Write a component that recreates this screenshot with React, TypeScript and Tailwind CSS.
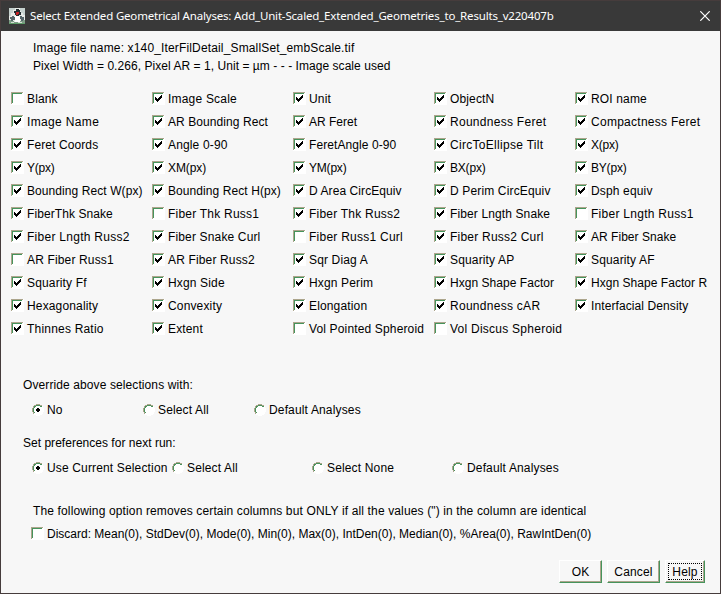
const rows: string[][] = [
  ["-Blank", "Image Scale", "Unit", "ObjectN", "ROI name"],
  ["Image Name", "AR Bounding Rect", "AR Feret", "Roundness Feret", "Compactness Feret"],
  ["Feret Coords", "Angle 0-90", "FeretAngle 0-90", "CircToEllipse Tilt", "X(px)"],
  ["Y(px)", "XM(px)", "YM(px)", "BX(px)", "BY(px)"],
  ["Bounding Rect W(px)", "Bounding Rect H(px)", "D Area CircEquiv", "D Perim CircEquiv", "Dsph equiv"],
  ["FiberThk Snake", "-Fiber Thk Russ1", "Fiber Thk Russ2", "Fiber Lngth Snake", "-Fiber Lngth Russ1"],
  ["Fiber Lngth Russ2", "Fiber Snake Curl", "-Fiber Russ1 Curl", "Fiber Russ2 Curl", "AR Fiber Snake"],
  ["-AR Fiber Russ1", "AR Fiber Russ2", "Sqr Diag A", "Squarity AP", "Squarity AF"],
  ["Squarity Ff", "Hxgn Side", "Hxgn Perim", "Hxgn Shape Factor", "Hxgn Shape Factor R"],
  ["Hexagonality", "Convexity", "Elongation", "Roundness cAR", "Interfacial Density"],
  ["Thinnes Ratio", "Extent", "-Vol Pointed Spheroid", "-Vol Discus Spheroid"],
];

// Labels whose letters sit tighter or looser than the rest.
const tracking: Record<string, string> = {
  "Image Name": "tracking-[0.35px]",
  "Image Scale": "tracking-[0.2px]",
  "AR Bounding Rect": "tracking-[0.08px]",
  "AR Feret": "tracking-[0px]",
  "Roundness Feret": "tracking-[0.28px]",
  "Compactness Feret": "tracking-[0.27px]",
  "Feret Coords": "tracking-[0.1px]",
  "FeretAngle 0-90": "tracking-[0.08px]",
  "CircToEllipse Tilt": "tracking-[0.3px]",
  "X(px)": "tracking-[-0.2px]",
  "Y(px)": "tracking-[-0.2px]",
  "XM(px)": "tracking-[-0.1px]",
  "YM(px)": "tracking-[-0.2px]",
  "BX(px)": "tracking-[-0.2px]",
  "BY(px)": "tracking-[-0.2px]",
  "Bounding Rect W(px)": "tracking-[0.08px]",
  "Bounding Rect H(px)": "tracking-[0.08px]",
  "D Area CircEquiv": "tracking-[0.08px]",
  "D Perim CircEquiv": "tracking-[0.15px]",
  "FiberThk Snake": "tracking-[0.08px]",
  "Fiber Lngth Russ2": "tracking-[0.27px]",
  "Fiber Lngth Russ1": "tracking-[0.27px]",
  "Fiber Lngth Snake": "tracking-[0.12px]",
  "Fiber Thk Russ1": "tracking-[0.22px]",
  "Fiber Thk Russ2": "tracking-[0.22px]",
  "Fiber Russ1 Curl": "tracking-[0.25px]",
  "Fiber Russ2 Curl": "tracking-[0.22px]",
  "AR Fiber Snake": "tracking-[0.03px]",
  "Hxgn Shape Factor": "tracking-[0.04px]",
  "Hxgn Shape Factor R": "tracking-[0.04px]",
  "Interfacial Density": "tracking-[0.1px]",
  "Roundness cAR": "tracking-[0.28px]",
  "Thinnes Ratio": "tracking-[0.2px]",
  "Vol Discus Spheroid": "tracking-[0.25px]",
};

function Box({ checked }: { checked: boolean }) {
  return (
    <svg className="h-[13px] w-[13px] shrink-0" viewBox="0 0 13 13" shapeRendering="crispEdges">
      <rect width="13" height="13" fill="#fff" />
      <path d="M0 0h12v1H1v11H0z" fill="#aca58c" />
      <path d="M1 1h10v1H2v9H1z" fill="#46945c" />
      {checked && (
        <path
          d="M3 5h1v3H3zM4 6h1v3H4zM5 7h1v3H5zM6 6h1v3H6zM7 5h1v3H7zM8 4h1v3H8zM9 3h1v3H9z"
          fill="#000"
        />
      )}
    </svg>
  );
}

function Check({ label, checked = true, className = "" }: { label: string; checked?: boolean; className?: string }) {
  return (
    <label className="flex h-[23px] items-center gap-[3px]">
      <Box checked={checked} />
      <span className={className}>{label}</span>
    </label>
  );
}

function Radio({ label, on = false, width }: { label: string; on?: boolean; width: string }) {
  return (
    <label className={`flex h-[23px] shrink-0 items-center gap-[3px] ${width}`}>
      <svg className="h-3 w-3 shrink-0" viewBox="0 0 12 12" shapeRendering="crispEdges">
        <path d="M4 0h4v1h2v1h1v2h1v4h-1v2h-1v1H8v1H4v-1H2v-1H1V8H0V4h1V2h1V1h2z" fill="#fff" />
        <path d="M4 0h4v1h2v1H8V1H4v1H2v2H1v4h1v2H1V8H0V4h1V2h1V1h2z" fill="#aca58c" />
        <path d="M4 1h4v1h2v1H8V2H4v1H3v1H2v4h1v1H2V8H1V4h1V2h2z" fill="#46945c" />
        {on && <path d="M5 4h2v1h1v2H7v1H5V7H4V5h1z" fill="#000" />}
      </svg>
      <span>{label}</span>
    </label>
  );
}

const btn =
  "flex h-[23px] items-center justify-center border-t border-l border-r border-b border-t-white border-l-white border-r-[#46945c] border-b-[#46945c] shadow-[inset_-1px_-1px_0_#aca58c]";

export default function App() {
  return (
    <div className="flex h-[594px] w-[721px] flex-col overflow-hidden border border-[#463c3c] bg-[#f7f7f7] font-['Liberation_Sans',Arial,sans-serif] text-[12px] leading-[18px] tracking-[0.15px] whitespace-nowrap text-black">
      <header className="flex h-[30px] shrink-0 items-center bg-[#393939] pr-[10px] pl-2 text-white">
        <svg className="h-4 w-4" viewBox="0 0 16 16" shapeRendering="crispEdges">
          <rect width="16" height="16" fill="#e8ebe8" />
          <path d="M0 0h6v2H4v3H2v3H0zM11 0h5v7h-2V5h-2V3h-1z" fill="#c6d2cf" />
          <path d="M7 1h3v1h1v2h1v3h-2v1H7V7H6V5H5V3h2z" fill="#222d30" />
          <path d="M7 4h3v2H9v1H7z" fill="#c52225" />
          <path d="M1 9h2V8h2v1h1v3H4v1H2v-2H1zM11 8h2v1h2v3h-1v1h-2v-2h-1z" fill="#56666a" />
          <path d="M6 8h4v1h1v5H6z" fill="#fff" />
          <path d="M0 12h2v1h3v1h6v-1h3v-1h2v4H0z" fill="#7d9c86" />
          <path d="M2 14h3v1H2zM9 14h4v1H9z" fill="#d5dfd5" />
          <path d="M0 15h16v1H0z" fill="#62a06c" />
        </svg>
        <h1 className="ml-[5px] font-['Noto_Sans','Open_Sans',sans-serif] text-[11.5px] tracking-[-0.18px]">
          Select Extended Geometrical Analyses: Add_Unit-Scaled_Extended_Geometries_to_Results_v220407b
        </h1>
        <svg className="ml-auto h-[10px] w-[10px]" viewBox="0 0 10 10" fill="none" stroke="#fff" strokeWidth="1.2">
          <path d="M.3.3l9.4 9.4M9.7.3L.3 9.7" />
        </svg>
      </header>
      <main className="flex flex-1 flex-col pl-[10px]">
        <div className="pt-2 pl-[22px]">
          <p>Image file name: x140_IterFilDetail_SmallSet_embScale.tif</p>
          <p className="tracking-[0.05px]">Pixel Width = 0.266, Pixel AR = 1, Unit = µm - - - Image scale used</p>
        </div>
        <div className="mt-[12px] grid grid-cols-[repeat(5,141px)]">
          {rows.flat().map((item) => {
            const label = item.replace(/^-/, "");
            return <Check key={item} label={label} checked={!item.startsWith("-")} className={tracking[label]} />;
          })}
        </div>
        <section className="mt-[36px] pl-3">
          <p className="tracking-[0.1px]">Override above selections with:</p>
          <div className="mt-[4px] flex pl-[9px]">
            <Radio label="No" on width="w-[111px]" />
            <Radio label="Select All" width="w-[111px]" />
            <Radio label="Default Analyses" width="w-[111px]" />
          </div>
        </section>
        <section className="mt-[13px] pl-3">
          <p className="tracking-[0.02px]">Set preferences for next run:</p>
          <div className="mt-[4px] flex pl-[9px]">
            <Radio label="Use Current Selection" on width="w-[140px]" />
            <Radio label="Select All" width="w-[140px]" />
            <Radio label="Select None" width="w-[140px]" />
            <Radio label="Default Analyses" width="w-[140px]" />
          </div>
        </section>
        <section className="mt-[23px] pl-5">
          <p className="pl-[2px] tracking-[0.135px]">
            The following option removes certain columns but ONLY if all the values (&quot;) in the column are identical
          </p>
          <div className="mt-[2px]">
            <Check
              checked={false}
              className="tracking-[0px]"
              label="Discard: Mean(0), StdDev(0), Mode(0), Min(0), Max(0), IntDen(0), Median(0), %Area(0), RawIntDen(0)"
            />
          </div>
        </section>
        <footer className="mt-[15px] flex justify-end gap-[5px] pr-[15px]">
          <button className={`${btn} w-[43px]`}>OK</button>
          <button className={`${btn} w-[53px]`}>Cancel</button>
          <button className={`${btn} w-[40px]`}>
            <span className="flex h-[17px] w-[34px] items-center justify-center border border-dotted border-black">Help</span>
          </button>
        </footer>
      </main>
    </div>
  );
}
